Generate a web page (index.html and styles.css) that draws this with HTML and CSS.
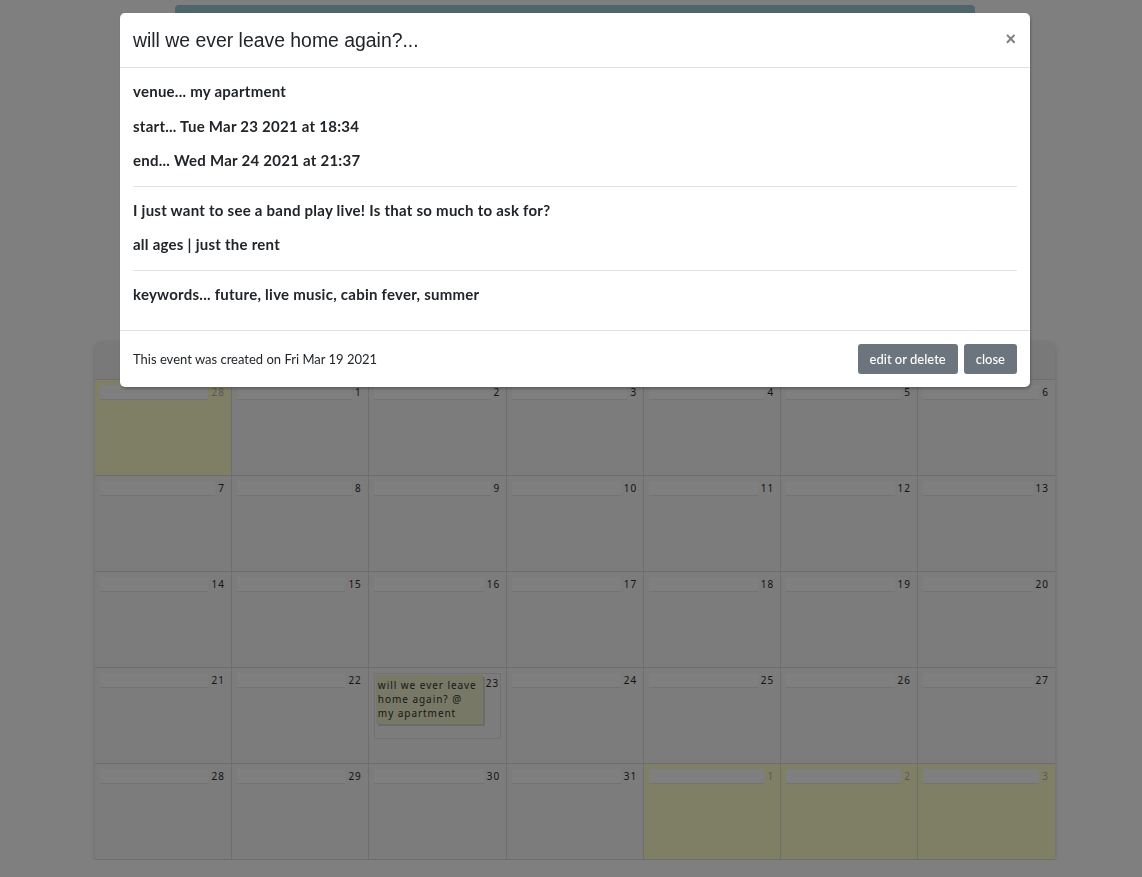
FILE: index.html
```html
<!DOCTYPE html>
<html>
<head>
<meta charset="utf-8">
<link rel="stylesheet" href="styles.css">
</head>
<body>
<div class="page">
  <div class="topbar"></div>
  <div class="calendar">
    <div class="cal-header"></div>
    <div class="grid">
      <div class="cell other"><div class="head"><div class="bar"></div><span class="num">28</span></div></div>
      <div class="cell"><div class="head"><div class="bar"></div><span class="num">1</span></div></div>
      <div class="cell"><div class="head"><div class="bar"></div><span class="num">2</span></div></div>
      <div class="cell"><div class="head"><div class="bar"></div><span class="num">3</span></div></div>
      <div class="cell"><div class="head"><div class="bar"></div><span class="num">4</span></div></div>
      <div class="cell"><div class="head"><div class="bar"></div><span class="num">5</span></div></div>
      <div class="cell"><div class="head"><div class="bar"></div><span class="num">6</span></div></div>

      <div class="cell"><div class="head"><div class="bar"></div><span class="num">7</span></div></div>
      <div class="cell"><div class="head"><div class="bar"></div><span class="num">8</span></div></div>
      <div class="cell"><div class="head"><div class="bar"></div><span class="num">9</span></div></div>
      <div class="cell"><div class="head"><div class="bar"></div><span class="num">10</span></div></div>
      <div class="cell"><div class="head"><div class="bar"></div><span class="num">11</span></div></div>
      <div class="cell"><div class="head"><div class="bar"></div><span class="num">12</span></div></div>
      <div class="cell"><div class="head"><div class="bar"></div><span class="num">13</span></div></div>

      <div class="cell"><div class="head"><div class="bar"></div><span class="num">14</span></div></div>
      <div class="cell"><div class="head"><div class="bar"></div><span class="num">15</span></div></div>
      <div class="cell"><div class="head"><div class="bar"></div><span class="num">16</span></div></div>
      <div class="cell"><div class="head"><div class="bar"></div><span class="num">17</span></div></div>
      <div class="cell"><div class="head"><div class="bar"></div><span class="num">18</span></div></div>
      <div class="cell"><div class="head"><div class="bar"></div><span class="num">19</span></div></div>
      <div class="cell"><div class="head"><div class="bar"></div><span class="num">20</span></div></div>

      <div class="cell"><div class="head"><div class="bar"></div><span class="num">21</span></div></div>
      <div class="cell"><div class="head"><div class="bar"></div><span class="num">22</span></div></div>
      <div class="cell"><div class="evbox"><div class="event">will we ever leave home again? @ my apartment</div><span class="num">23</span></div></div>
      <div class="cell"><div class="head"><div class="bar"></div><span class="num">24</span></div></div>
      <div class="cell"><div class="head"><div class="bar"></div><span class="num">25</span></div></div>
      <div class="cell"><div class="head"><div class="bar"></div><span class="num">26</span></div></div>
      <div class="cell"><div class="head"><div class="bar"></div><span class="num">27</span></div></div>

      <div class="cell"><div class="head"><div class="bar"></div><span class="num">28</span></div></div>
      <div class="cell"><div class="head"><div class="bar"></div><span class="num">29</span></div></div>
      <div class="cell"><div class="head"><div class="bar"></div><span class="num">30</span></div></div>
      <div class="cell"><div class="head"><div class="bar"></div><span class="num">31</span></div></div>
      <div class="cell other"><div class="head"><div class="bar"></div><span class="num">1</span></div></div>
      <div class="cell other"><div class="head"><div class="bar"></div><span class="num">2</span></div></div>
      <div class="cell other"><div class="head"><div class="bar"></div><span class="num">3</span></div></div>
    </div>
  </div>
</div>

<div class="backdrop"></div>

<div class="modal">
  <div class="dialog">
    <div class="m-header">
      <h5 class="m-title">will we ever leave home again?...</h5>
      <span class="close">&times;</span>
    </div>
    <div class="m-body">
      <p>venue... my apartment</p>
      <p>start... Tue Mar 23 2021 at 18:34</p>
      <p>end... Wed Mar 24 2021 at 21:37</p>
      <hr>
      <p>I just want to see a band play live! Is that so much to ask for?</p>
      <p>all ages | just the rent</p>
      <hr>
      <p>keywords... future, live music, cabin fever, summer</p>
    </div>
    <div class="m-footer">
      <span class="created">This event was created on Fri Mar 19 2021</span>
      <div class="btns">
        <button class="btn">edit or delete</button>
        <button class="btn">close</button>
      </div>
    </div>
  </div>
</div>
</body>
</html>
```

FILE: styles.css
```css
html, body {
  margin: 0;
  padding: 0;
  background: #ffffff;
  font-family: "Lato", "Liberation Sans", sans-serif;
}

.page {
  width: 960px;
  margin-left: 95px;
  padding-top: 5px;
}

.topbar {
  height: 40px;
  margin: 0 80px;
  background: #9ccad8;
  border-radius: 4px 4px 0 0;
}

.calendar {
  margin-top: 296px;
  background: #f8f8f8;
  border-radius: 7px 7px 0 0;
  box-shadow: 0 2px 5px rgba(0, 0, 0, 0.18);
}

.cal-header {
  height: 38px;
  background: #f2f2f2;
  border-radius: 7px 7px 0 0;
  border-bottom: 1px solid #dcdcdc;
}

.grid {
  display: grid;
  grid-template-columns: repeat(7, 1fr);
  grid-auto-rows: 96px;
}

.cell {
  border-right: 1px solid #dcdcdc;
  border-bottom: 1px solid #dcdcdc;
  padding: 5px 5px 0 5px;
  box-sizing: border-box;
}

.cell:nth-child(7n) {
  border-right: 0;
}

.cell.other {
  background: #ffffcc;
}

.head {
  display: flex;
  align-items: flex-start;
}

.bar {
  flex: 1;
  height: 14px;
  background: #ffffff;
  border-bottom: 1px solid #e6e6e6;
}

.num {
  font-family: "Noto Sans", sans-serif;
  font-size: 10px;
  line-height: 15px;
  letter-spacing: 1px;
  color: #2a2a2a;
  padding-left: 3px;
  padding-right: 1px;
}

.other .num {
  color: #b4b4a4;
}

.evbox {
  display: flex;
  align-items: flex-start;
  height: 64px;
  border: 1px solid #e3e3e3;
}

.evbox .num {
  padding-top: 2px;
}

.event {
  width: 99px;
  height: 46px;
  margin: 1px 0 0 1px;
  padding: 3px 6px 0 2px;
  background: #f0f0cc;
  box-shadow: 2px 2px 0 #d6d6d6;
  font-family: "Noto Sans", sans-serif;
  font-size: 10px;
  line-height: 14px;
  letter-spacing: 0.95px;
  color: #333333;
}

.backdrop {
  position: fixed;
  inset: 0;
  background: rgba(0, 0, 0, 0.5);
}

.modal {
  position: fixed;
  inset: 0;
  padding-top: 13px;
}

.dialog {
  width: 910px;
  margin-left: 120px;
  background: #ffffff;
  border-radius: 5px;
  box-shadow: 1px 2px 3px rgba(0, 0, 0, 0.25);
  color: #212529;
}

.m-header {
  display: flex;
  align-items: center;
  justify-content: space-between;
  height: 54px;
  padding: 0 13px;
  border-bottom: 1px solid #dee2e6;
}

.m-title {
  margin: 0;
  font-family: "Liberation Sans", Arial, sans-serif;
  font-size: 19.4px;
  font-weight: 400;
  color: #212529;
}

.close {
  font-family: "Liberation Sans", Arial, sans-serif;
  font-size: 18px;
  font-weight: 700;
  color: #808080;
  line-height: 1;
  margin-top: -3px;
  margin-right: 1px;
}

.m-body {
  padding: 14px 13px 11px 13px;
}

.m-body p {
  margin: 0 0 15px 0;
  font-size: 15px;
  line-height: 19.5px;
  font-weight: 700;
  letter-spacing: 0.25px;
}

.m-body hr {
  margin: 0 0 14px 0;
  border: 0;
  border-top: 1px solid #e2e2e2;
}

.m-footer {
  display: flex;
  align-items: center;
  justify-content: space-between;
  height: 56px;
  padding: 0 13px;
  border-top: 1px solid #dee2e6;
}

.created {
  font-size: 13px;
  color: #212529;
}

.btns {
  display: flex;
  gap: 6px;
}

.btn {
  height: 30px;
  padding: 0 12px;
  border: 0;
  border-radius: 3px;
  background: #6c757d;
  color: #ffffff;
  font-family: "Lato", "Liberation Sans", sans-serif;
  font-size: 13px;
  font-weight: 500;
}
```
